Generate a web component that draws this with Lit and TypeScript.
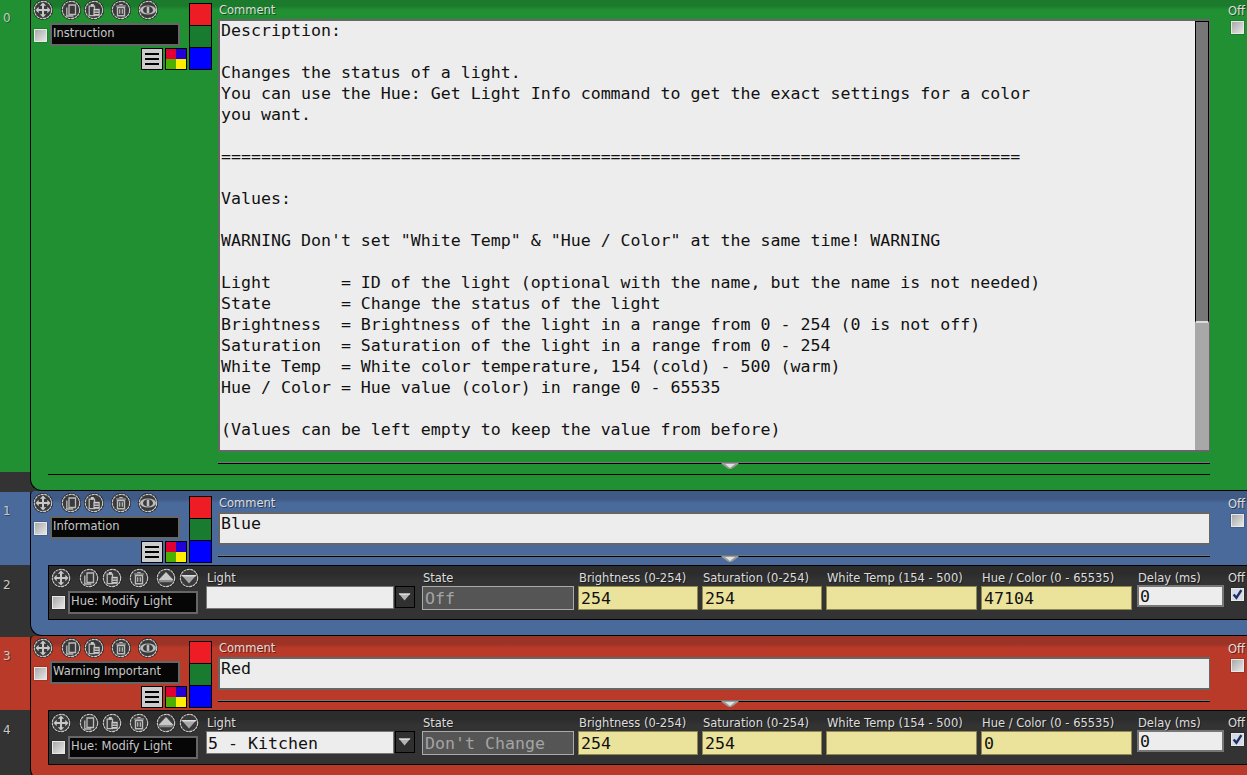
import { LitElement, html, css, svg } from "lit";
import { customElement } from "lit/decorators.js";

const DESCRIPTION = `Description:

Changes the status of a light.
You can use the Hue: Get Light Info command to get the exact settings for a color
you want.

================================================================================

Values:

WARNING Don't set "White Temp" & "Hue / Color" at the same time! WARNING

Light       = ID of the light (optional with the name, but the name is not needed)
State       = Change the status of the light
Brightness  = Brightness of the light in a range from 0 - 254 (0 is not off)
Saturation  = Saturation of the light in a range from 0 - 254
White Temp  = White color temperature, 154 (cold) - 500 (warm)
Hue / Color = Hue value (color) in range 0 - 65535

(Values can be left empty to keep the value from before)`;

const GLYPHS: Record<string, unknown> = {
  move: svg`<path d="M10 2.5l3.2 3.2h-2.2v3.3h3.3V6.8l3.2 3.2-3.2 3.2V11h-3.3v3.3h2.2L10 17.5l-3.2-3.2H9V11H5.7v2.2L2.5 10l3.2-3.2V9H9V5.7H6.8z" fill="#c8c8c8"/>`,
  copy: svg`<path d="M8 5h6.5v9.5H8z" fill="none" stroke="#bcbcbc" stroke-width="1.3"/><path d="M5.8 7.5V16h6.5" fill="none" stroke="#bcbcbc" stroke-width="1.3"/>`,
  paste: svg`<path d="M5.2 6.2h5.3v9.5H5.2z" fill="none" stroke="#bcbcbc" stroke-width="1.3"/><path d="M6.8 4h3v2.5h-3z" fill="#cccccc"/><path d="M9.5 8.8h6.2v7H9.5z" fill="#cccccc"/><path d="M10.5 11h4.2M10.5 13.4h4.2" stroke="#333" stroke-width="1"/>`,
  trash: svg`<path d="M6.5 7.5h7v8.2h-7z" fill="none" stroke="#bcbcbc" stroke-width="1.4"/><path d="M5.2 6h9.6M8.3 4.5h3.4M8.7 9.2v4.6M11.3 9.2v4.6" stroke="#bcbcbc" stroke-width="1.2" fill="none"/>`,
  eye: svg`<ellipse cx="10" cy="10" rx="8" ry="4.6" fill="#bcbcbc"/><ellipse cx="10" cy="10" rx="5" ry="3.7" fill="#3a3a3a"/><path d="M8.7 6.6h2.6v6.8H8.7z" fill="#bcbcbc"/>`,
  up: svg`<path d="M10 4l7.5 8H2.5z" fill="#c8c8c8"/><path d="M2.5 12h15l-1.5 2.2H4z" fill="#8c8c8c"/>`,
  down: svg`<path d="M2.5 7h15L10 15.5z" fill="#a8a8a8"/><path d="M2.5 7h15l-1.2 1.6H3.7z" fill="#dcdcdc"/>`,
};

type FieldSpec = { label: string; value: string; kind: string };

const ACTION_1: FieldSpec[] = [
  { label: "State", value: "Off", kind: "state" },
  { label: "Brightness (0-254)", value: "254", kind: "w120" },
  { label: "Saturation (0-254)", value: "254", kind: "w120" },
  { label: "White Temp (154 - 500)", value: "", kind: "w151" },
  { label: "Hue / Color (0 - 65535)", value: "47104", kind: "w151" },
];

const ACTION_2: FieldSpec[] = [
  { label: "State", value: "Don't Change", kind: "state" },
  { label: "Brightness (0-254)", value: "254", kind: "w120" },
  { label: "Saturation (0-254)", value: "254", kind: "w120" },
  { label: "White Temp (154 - 500)", value: "", kind: "w151" },
  { label: "Hue / Color (0 - 65535)", value: "0", kind: "w151" },
];

@customElement("app-root")
export class AppRoot extends LitElement {
  static styles = css`
    :host {
      display: block;
      height: 775px;
      overflow: hidden;
      background: #333;
      font-family: "DejaVu Sans", sans-serif;
      font-size: 11.5px;
      color: #ddd;
    }
    .list {
      margin-top: -2px;
    }
    .block {
      display: flex;
      align-items: stretch;
    }
    .green {
      --base: #219033;
      --top: #1c7a2d;
    }
    .blue {
      --base: #4a6a9b;
      --top: #3f5a85;
    }
    .red {
      --base: #b93a28;
      --top: #9c3327;
    }
    .gutter {
      width: 30px;
      flex: none;
      padding-top: 1px;
      box-sizing: border-box;
      display: flex;
      flex-direction: column;
    }
    .cell {
      box-sizing: border-box;
      padding: 12px 0 0 3px;
      font-size: 12px;
      color: #c8c8c8;
      text-shadow: 1px 1px 0 rgba(0, 0, 0, 0.35);
    }
    .cell.tint {
      background: var(--base);
    }
    .h473 {
      height: 473px;
    }
    .h73 {
      height: 73px;
    }
    .h71 {
      height: 71px;
      padding-top: 13px;
    }
    .panel {
      flex: 1;
      min-width: 0;
      border-left: 1px solid #000;
      border-bottom: 1px solid #000;
      border-top-left-radius: 4px;
      border-bottom-left-radius: 12px;
      background: linear-gradient(var(--top), var(--top) 8px, var(--base) 12px);
    }
    .head {
      display: flex;
      align-items: flex-start;
    }
    .tools {
      width: 156px;
      flex: none;
      padding: 2px 0 0 2px;
      box-sizing: content-box;
    }
    .icons {
      display: flex;
      height: 20px;
    }
    .icon {
      width: 20px;
      height: 20px;
      display: block;
      flex: none;
    }
    .copy {
      margin-left: 8px;
    }
    .paste,
    .down {
      margin-left: 3px;
    }
    .trash,
    .eye,
    .up {
      margin-left: 7px;
    }
    .name-row {
      display: flex;
      align-items: center;
      margin-top: 3px;
    }
    .check {
      width: 13px;
      height: 13px;
      box-sizing: border-box;
      flex: none;
      border: 1px solid #e8e8e8;
      background: linear-gradient(135deg, #a9a9a9, #e6e6e6);
      box-shadow: 0 0 0 0.5px rgba(0, 0, 0, 0.25);
      display: block;
    }
    .check.on {
      background: #d7dbe6;
    }
    .check svg {
      display: block;
      width: 11px;
      height: 11px;
    }
    .name-row .check {
      margin: 2px 3px 0 1px;
    }
    .name {
      width: 130px;
      height: 23px;
      box-sizing: border-box;
      border: 2px solid #666;
      background: #060606;
      color: rgba(255, 255, 255, 0.78);
      padding-left: 1px;
      line-height: 16px;
      white-space: nowrap;
      overflow: hidden;
    }
    .btns {
      display: flex;
      justify-content: flex-end;
      gap: 2px;
      margin-top: 2px;
      padding-right: 2px;
    }
    .btn {
      width: 22px;
      height: 22px;
      box-sizing: border-box;
      border: 1px solid #000;
      display: block;
    }
    .menu {
      background: #ccc;
      padding: 4px 3px;
      display: flex;
      flex-direction: column;
      justify-content: space-between;
    }
    .menu i {
      display: block;
      height: 2px;
      background: #000;
    }
    .quad {
      display: grid;
      grid-template-columns: 1fr 1fr;
      grid-template-rows: 1fr 1fr;
    }
    .q1 {
      background: #e00034;
    }
    .q2 {
      background: #2200d8;
    }
    .q3 {
      background: #4cb000;
    }
    .q4 {
      background: #ffee00;
    }
    .stack {
      width: 23px;
      box-sizing: border-box;
      flex: none;
      margin-top: 5px;
      border: 1px solid #000;
      display: flex;
      flex-direction: column;
      gap: 1px;
      background: #000;
    }
    .stack i {
      display: block;
      height: 21px;
    }
    .s-red {
      background: #ee1c25;
    }
    .s-green {
      background: #197b30;
    }
    .s-blue {
      background: #0000ff;
    }
    .comment {
      width: 992px;
      flex: none;
      margin-left: 6px;
      position: relative;
      padding: 5px 0 8px;
    }
    .lbl {
      display: block;
      height: 16px;
      line-height: 14px;
      white-space: nowrap;
      text-shadow: 1px 1px 0 rgba(0, 0, 0, 0.45);
    }
    .comment .lbl {
      padding-left: 1px;
    }
    .area {
      box-sizing: border-box;
      border: 2px solid #666;
      border-right-width: 1px;
      background: #ededed;
      color: #111;
      font-family: "DejaVu Sans Mono", monospace;
      font-size: 16.6px;
      line-height: 21px;
      display: flex;
      overflow: hidden;
      height: 33px;
    }
    .area.big {
      height: 433px;
    }
    .text {
      flex: 1;
      margin: -1px 0 0;
      padding: 0 0 0 1px;
      font: inherit;
      white-space: pre;
      overflow: hidden;
    }
    .bar {
      width: 14px;
      flex: none;
      background: #a8a8a8;
    }
    .thumb {
      height: 302px;
      box-sizing: border-box;
      background: #777;
      border: 1px solid #000;
      border-bottom: 2px solid #ddd;
    }
    .rule {
      margin-top: 10px;
      height: 2px;
      background: linear-gradient(#777 50%, #000 50%);
    }
    .handle {
      position: absolute;
      left: 503px;
      bottom: 3px;
      width: 18px;
      height: 6px;
      display: block;
    }
    .off {
      margin-left: 18px;
      padding-top: 6px;
      width: 19px;
      flex: none;
    }
    .off .check {
      margin: 1px 0 0 3px;
    }
    .children {
      padding-bottom: 15px;
      padding-left: 17px;
    }
    .children.empty {
      margin-top: 2px;
      margin-right: 37px;
    }
    .line {
      height: 1px;
      background: #000;
    }
    .action {
      height: 55px;
      box-sizing: border-box;
      border: 1px solid #000;
      border-right: none;
      background: linear-gradient(#2c2c2c, #2c2c2c 8px, #333 14px);
      display: flex;
      align-items: flex-start;
      padding: 2px 0 0 2px;
    }
    .action .tools {
      width: 153px;
      padding: 0;
    }
    .action .name-row .check {
      margin: 0 3px 0 1px;
    }
    .fields {
      display: flex;
      gap: 4px;
      margin-left: 2px;
    }
    .fld {
      padding-top: 3px;
    }
    .fld .lbl {
      padding-left: 1px;
      height: 15px;
    }
    .val {
      height: 24px;
      box-sizing: border-box;
      font-family: "DejaVu Sans Mono", monospace;
      font-size: 16.6px;
      line-height: 23px;
      padding-left: 1px;
      white-space: pre;
      overflow: hidden;
      color: #111;
    }
    .state .val {
      background: #555;
      border: 1px solid #aaa;
      color: #a4a4a4;
      padding-left: 2px;
    }
    .state {
      width: 152px;
    }
    .w120 {
      width: 120px;
    }
    .w151 {
      width: 151px;
    }
    .w120 .val,
    .w151 .val {
      background: #ebe39b;
      border: 1px solid #8f8b50;
      padding-left: 2px;
    }
    .pick {
      display: flex;
      gap: 1px;
    }
    .pick .val {
      width: 188px;
      height: 23px;
      background: #ededed;
      border: 1px solid #777;
      line-height: 24px;
    }
    .drop {
      width: 20px;
      height: 22px;
      box-sizing: border-box;
      border: 1px solid #000;
      background: #303030;
      display: block;
    }
    .light {
      width: 209px;
      margin-right: 3px;
    }
    .delay {
      width: 87px;
      margin-left: 1px;
    }
    .delay .val {
      height: 22px;
      background: #ededed;
      border: 2px solid #777;
      line-height: 20px;
      padding-left: 1px;
    }
    .delay .lbl {
      height: 14px;
    }
    .act-off {
      margin-left: 4px;
      padding-top: 3px;
      width: 19px;
    }
    .act-off .lbl {
      height: 17px;
    }
    .act-off .check {
      margin-left: 3px;
    }
  `;

  private icon(name: string) {
    return html`<svg class="icon ${name}" viewBox="0 0 20 20">
      <circle cx="10" cy="10" r="10" fill="#161616" />
      <circle cx="10" cy="10" r="8.7" fill="#3a3a3a" stroke="#cacaca" stroke-width="1.2" stroke-dasharray="3 0.5" />
      ${GLYPHS[name]}
    </svg>`;
  }

  private check(on = false) {
    return html`<span class="check ${on ? "on" : ""}">
      ${on
        ? html`<svg viewBox="0 0 10 10"><path d="M1.5 5l2.5 3L8.5 1" fill="none" stroke="#1c2f66" stroke-width="2.2" /></svg>`
        : ""}
    </span>`;
  }

  private head(name: string, text: string, big = false) {
    return html`<div class="head">
      <div class="tools">
        <div class="icons">${["move", "copy", "paste", "trash", "eye"].map((n) => this.icon(n))}</div>
        <div class="name-row">${this.check()}<div class="name">${name}</div></div>
        <div class="btns">
          <span class="btn menu"><i></i><i></i><i></i></span>
          <span class="btn quad"><i class="q1"></i><i class="q2"></i><i class="q3"></i><i class="q4"></i></span>
        </div>
      </div>
      <div class="stack"><i class="s-red"></i><i class="s-green"></i><i class="s-blue"></i></div>
      <div class="comment">
        <span class="lbl">Comment</span>
        <div class="area ${big ? "big" : ""}">
          <pre class="text">${text}</pre>
          ${big ? html`<div class="bar"><div class="thumb"></div></div>` : ""}
        </div>
        <div class="rule"></div>
        <svg class="handle" viewBox="0 0 18 6">
          <path d="M0 0h18l-2 2-4 3-2 1h-2l-2-1-4-3z" fill="#9a9a9a" />
          <path d="M4 1h10L9 5z" fill="#e2e2e2" />
        </svg>
      </div>
      <div class="off"><span class="lbl">Off</span>${this.check()}</div>
    </div>`;
  }

  private action(light: string, fields: FieldSpec[]) {
    return html`<div class="action">
      <div class="tools">
        <div class="icons">${["move", "copy", "paste", "trash", "up", "down"].map((n) => this.icon(n))}</div>
        <div class="name-row">${this.check()}<div class="name">Hue: Modify Light</div></div>
      </div>
      <div class="fields">
        <div class="fld light">
          <span class="lbl">Light</span>
          <div class="pick">
            <div class="val">${light}</div>
            <svg class="drop" viewBox="0 0 20 22"><path d="M3 7h13l-6.5 8z" fill="#b5b5b5" /><path d="M3 7h13l-1 1.5H4z" fill="#e4e4e4" /></svg>
          </div>
        </div>
        ${fields.map(
          (f) => html`<div class="fld ${f.kind}">
            <span class="lbl">${f.label}</span>
            <div class="val">${f.value}</div>
          </div>`
        )}
        <div class="fld delay">
          <span class="lbl">Delay (ms)</span>
          <div class="val">0</div>
        </div>
      </div>
      <div class="act-off"><span class="lbl">Off</span>${this.check(true)}</div>
    </div>`;
  }

  render() {
    return html`<div class="list">
      <div class="block green">
        <div class="gutter"><div class="cell tint h473">0</div></div>
        <div class="panel">
          ${this.head("Instruction", DESCRIPTION, true)}
          <div class="children empty"><div class="line"></div></div>
        </div>
      </div>
      <div class="block blue">
        <div class="gutter">
          <div class="cell tint h73">1</div>
          <div class="cell h71">2</div>
        </div>
        <div class="panel">
          ${this.head("Information", "Blue")}
          <div class="children">${this.action("", ACTION_1)}</div>
        </div>
      </div>
      <div class="block red">
        <div class="gutter">
          <div class="cell tint h73">3</div>
          <div class="cell h71">4</div>
        </div>
        <div class="panel">
          ${this.head("Warning Important", "Red")}
          <div class="children">${this.action("5 - Kitchen", ACTION_2)}</div>
        </div>
      </div>
    </div>`;
  }
}
